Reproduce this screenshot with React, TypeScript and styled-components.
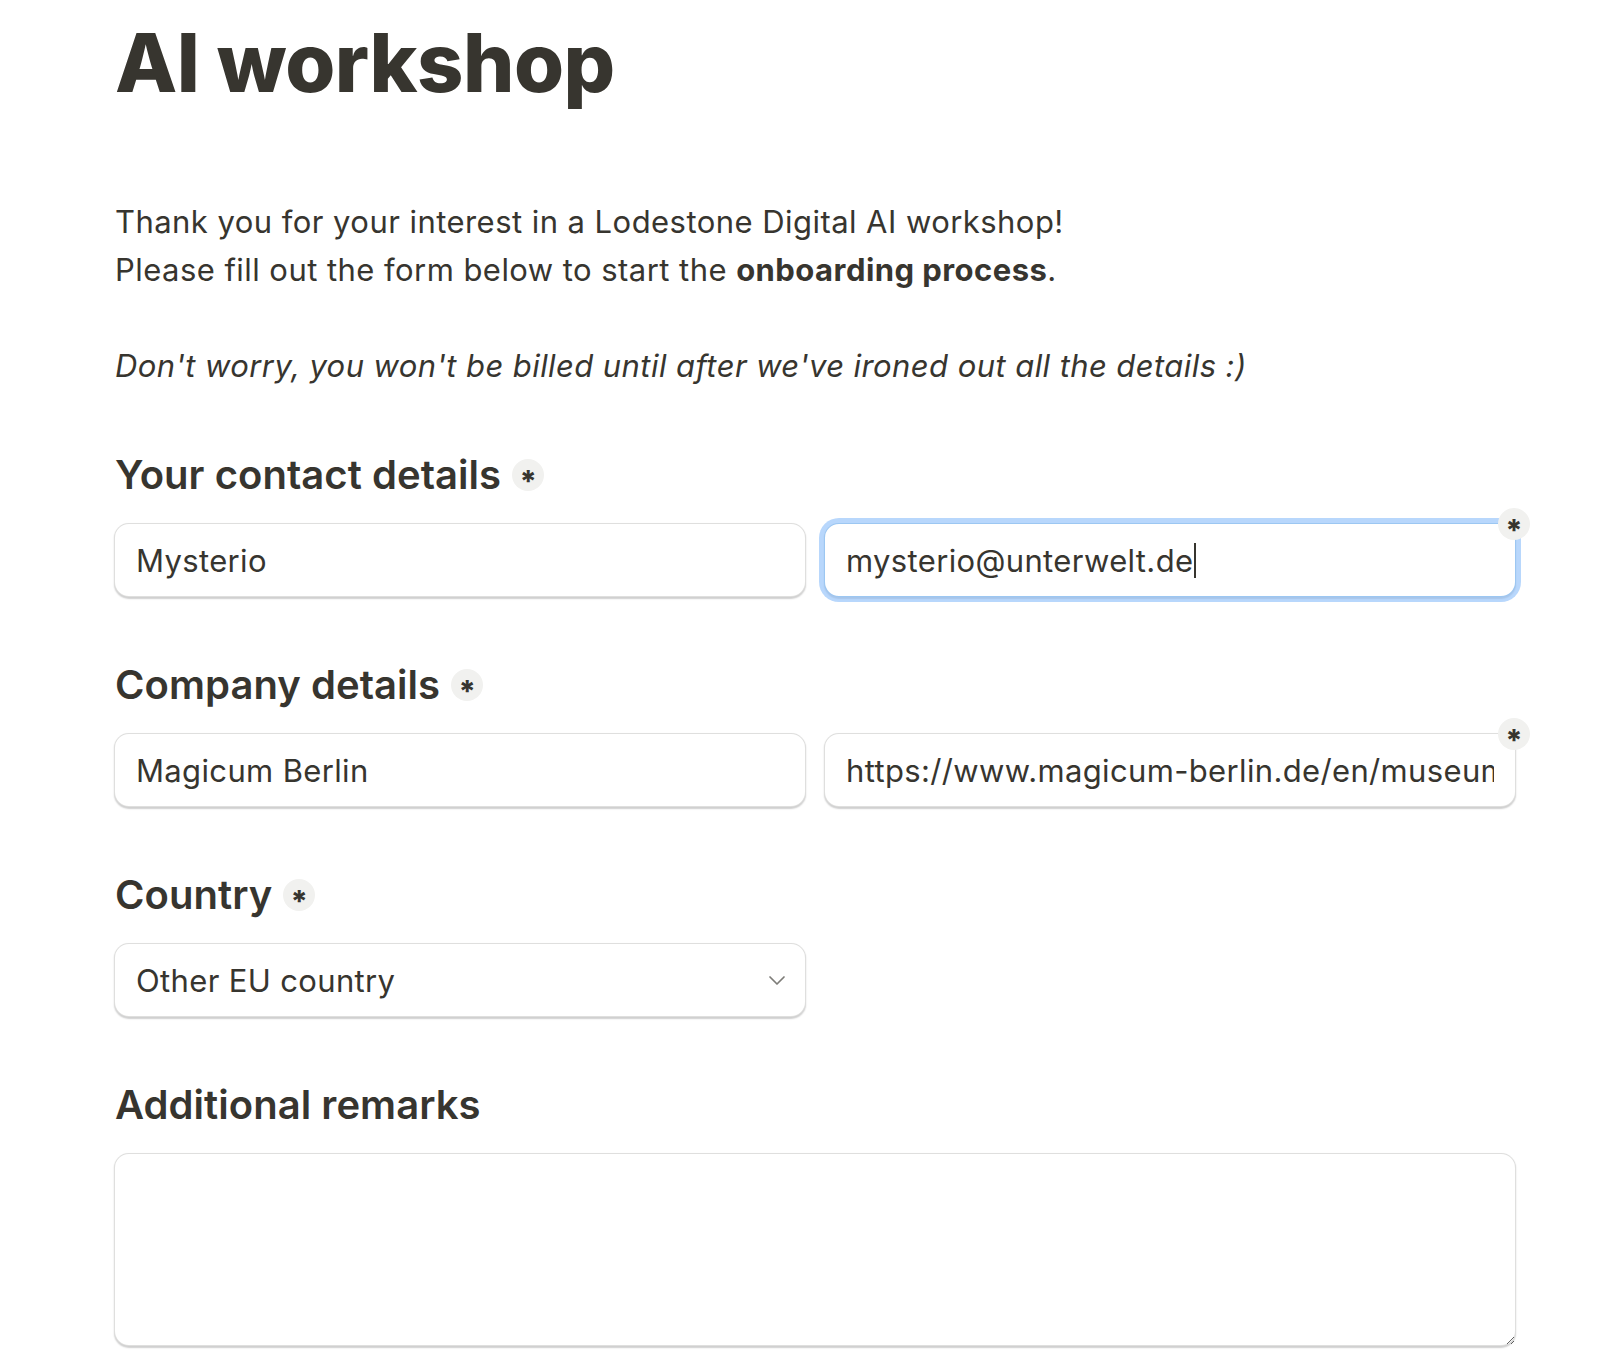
import React, { useEffect, useRef, useState } from "react";
import styled, { createGlobalStyle, css } from "styled-components";

const Global = createGlobalStyle`
  html, body { margin: 0; padding: 0; background: #ffffff; }
  body {
    font-family: Inter, "Noto Sans", "Liberation Sans", sans-serif;
    color: #37352f;
    -webkit-font-smoothing: antialiased;
  }
  * { box-sizing: border-box; }
`;

const Page = styled.main`
  width: 1402px;
  margin-left: 114px;
  padding-bottom: 40px;
`;

const Title = styled.h1`
  margin: 0;
  padding-top: 14px;
  padding-left: 1px;
  font-size: 81px;
  line-height: 98px;
  font-weight: 800;
  letter-spacing: -0.5px;
  color: #37352f;
`;

const Intro = styled.p`
  margin: 86px 0 0;
  padding-left: 1px;
  font-size: 31px;
  line-height: 48px;
  font-weight: 400;
  letter-spacing: 0.45px;
  strong { font-weight: 700; }
`;

const Note = styled.p`
  margin: 48px 0 0;
  padding-left: 1px;
  font-size: 31px;
  line-height: 48px;
  font-style: italic;
  letter-spacing: 0.42px;
`;

const Section = styled.section<{ $first?: boolean }>`
  margin-top: ${(p) => (p.$first ? "60px" : "63px")};
  display: flex;
  flex-direction: column;
  gap: 23px;
`;

const HeadingRow = styled.div`
  display: flex;
  align-items: center;
  gap: 11px;
  height: 50px;
  padding-left: 1px;
`;

const Heading = styled.h2`
  margin: 0;
  font-size: 40px;
  line-height: 50px;
  font-weight: 600;
  letter-spacing: 0.05px;
`;

const Badge = styled.span<{ $corner?: boolean }>`
  width: 32px;
  height: 32px;
  border-radius: 50%;
  background: #f1f1ef;
  display: inline-flex;
  align-items: center;
  justify-content: center;
  font-size: 30px;
  font-weight: 800;
  line-height: 1;
  padding-top: 11px;
  color: #37352f;
  ${(p) =>
    p.$corner &&
    css`
      position: absolute;
      top: -15px;
      right: -14px;
      z-index: 2;
    `}
`;

const Row = styled.div<{ $cols: number }>`
  display: grid;
  grid-template-columns: ${(p) => (p.$cols === 2 ? "1fr 1fr" : "692px")};
  gap: 18px;
`;

const FieldWrap = styled.div`
  position: relative;
`;

const FONT_SIZE = 31;
const LETTER = 0.35;
const PAD = 21;
const BORDER = 1.5;

const fieldBase = css`
  width: 100%;
  font-family: Inter, "Noto Sans", "Liberation Sans", sans-serif;
  font-size: ${FONT_SIZE}px;
  letter-spacing: ${LETTER}px;
  color: #37352f;
  background: #ffffff;
  border: ${BORDER}px solid rgba(55, 53, 47, 0.16);
  border-radius: 15px;
  box-shadow: 0 1.5px 1.5px rgba(15, 15, 15, 0.2);
  outline: none;
`;

const TextInput = styled.input<{ $focused?: boolean }>`
  ${fieldBase}
  height: 74px;
  padding: 0 ${PAD}px;
  caret-color: transparent;
  ${(p) =>
    p.$focused &&
    css`
      border-color: rgba(35, 131, 226, 0.45);
      box-shadow: 0 0 0 5px rgba(140, 190, 250, 0.62), 0 1.5px 1.5px rgba(15, 15, 15, 0.2);
    `}
`;

const Caret = styled.span`
  position: absolute;
  top: 20px;
  width: 2px;
  height: 35px;
  background: #37352f;
  pointer-events: none;
`;

const Select = styled.select`
  ${fieldBase}
  appearance: none;
  -webkit-appearance: none;
  height: 74px;
  padding: 0 60px 0 ${PAD}px;
`;

const Chevron = styled.svg`
  position: absolute;
  right: 18px;
  top: 50%;
  transform: translateY(-50%);
  width: 22px;
  height: 22px;
  pointer-events: none;
`;

const TextArea = styled.textarea`
  ${fieldBase}
  height: 193px;
  padding: 18px ${PAD}px;
  resize: vertical;
  display: block;
`;

function FocusedInput({ value }: { value: string }) {
  const [caretX, setCaretX] = useState<number | null>(null);
  const ref = useRef<HTMLInputElement>(null);
  useEffect(() => {
    const measure = () => {
      const canvas = document.createElement("canvas");
      const ctx = canvas.getContext("2d");
      if (!ctx) return;
      ctx.font = `400 ${FONT_SIZE}px Inter, "Noto Sans", sans-serif`;
      const w = ctx.measureText(value).width + LETTER * value.length;
      setCaretX(BORDER + PAD + w);
    };
    measure();
    if ((document as any).fonts?.ready) {
      (document as any).fonts.ready.then(measure);
    }
  }, [value]);
  return (
    <>
      <TextInput ref={ref} $focused defaultValue={value} />
      {caretX !== null && <Caret style={{ left: caretX }} />}
    </>
  );
}

export default function App() {
  return (
    <>
      <Global />
      <Page>
        <Title>AI workshop</Title>
        <Intro>
          Thank you for your interest in a Lodestone Digital AI workshop!
          <br />
          Please fill out the form below to start the <strong>onboarding process</strong>.
        </Intro>
        <Note>Don't worry, you won't be billed until after we've ironed out all the details :)</Note>

        <Section $first>
          <HeadingRow>
            <Heading>Your contact details</Heading>
            <Badge>*</Badge>
          </HeadingRow>
          <Row $cols={2}>
            <FieldWrap>
              <TextInput defaultValue="Mysterio" />
            </FieldWrap>
            <FieldWrap>
              <FocusedInput value="mysterio@unterwelt.de" />
              <Badge $corner>*</Badge>
            </FieldWrap>
          </Row>
        </Section>

        <Section>
          <HeadingRow>
            <Heading>Company details</Heading>
            <Badge>*</Badge>
          </HeadingRow>
          <Row $cols={2}>
            <FieldWrap>
              <TextInput defaultValue="Magicum Berlin" />
            </FieldWrap>
            <FieldWrap>
              <TextInput defaultValue="https://www.magicum-berlin.de/en/museum/" />
              <Badge $corner>*</Badge>
            </FieldWrap>
          </Row>
        </Section>

        <Section>
          <HeadingRow>
            <Heading>Country</Heading>
            <Badge>*</Badge>
          </HeadingRow>
          <Row $cols={1}>
            <FieldWrap>
              <Select defaultValue="other">
                <option value="de">Germany</option>
                <option value="other">Other EU country</option>
                <option value="non">Non-EU country</option>
              </Select>
              <Chevron viewBox="0 0 22 22" fill="none">
                <path d="M4 8 L11 15 L18 8" stroke="#7d7c78" strokeWidth="1.7" strokeLinecap="round" strokeLinejoin="round" />
              </Chevron>
            </FieldWrap>
          </Row>
        </Section>

        <Section>
          <HeadingRow>
            <Heading>Additional remarks</Heading>
          </HeadingRow>
          <TextArea />
        </Section>
      </Page>
    </>
  );
}
